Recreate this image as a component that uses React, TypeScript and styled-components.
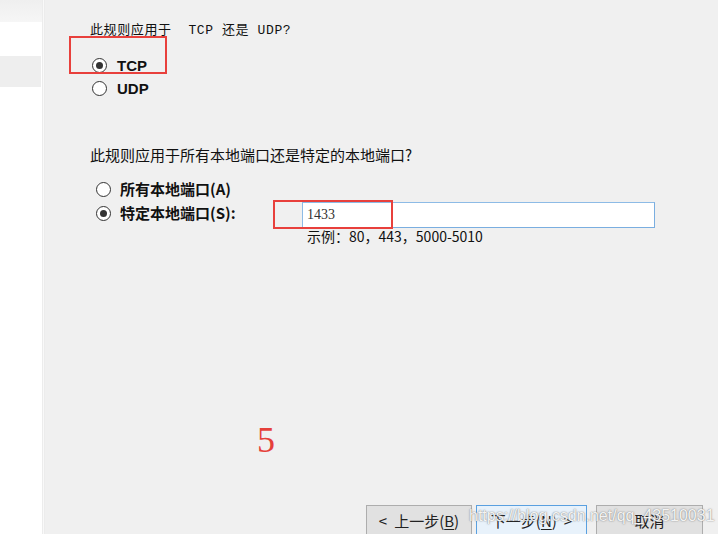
import React from "react";
import styled, { createGlobalStyle } from "styled-components";

const Global = createGlobalStyle`
  html, body { margin: 0; padding: 0; }
  body {
    width: 718px;
    height: 534px;
    overflow: hidden;
    background: #f0f0f0;
    font-family: "Noto Sans CJK SC", "Noto Sans", sans-serif;
    color: #000;
  }
`;

const Page = styled.div`
  display: flex;
  width: 718px;
  height: 534px;
  overflow: hidden;
`;

const Sidebar = styled.div`
  width: 42px;
  flex-shrink: 0;
  background: #ffffff;
  display: flex;
  flex-direction: column;
`;

const SideHeader = styled.div`
  height: 22px;
  background: linear-gradient(#efefef, #f6f6f6);
`;

const SideItem = styled.div<{ $active?: boolean }>`
  height: 31px;
  margin-top: 34px;
  width: 41px;
  background: ${(p) => (p.$active ? "#eeeeee" : "transparent")};
`;

const Divider = styled.div`
  box-sizing: border-box;
  width: 3px;
  flex-shrink: 0;
  background: #f9f9f9;
  border-left: 1px solid #ececec;
  border-right: 1px solid #ececec;
`;

const Main = styled.div`
  position: relative;
  flex: 1;
  display: flex;
  flex-direction: column;
  padding-left: 45px;
  background: #f0f0f0;
`;

const Question = styled.div<{ $mono?: boolean; $size: number; $top: number }>`
  margin-top: ${(p) => p.$top}px;
  font-size: ${(p) => p.$size}px;
  line-height: 20px;
  height: 20px;
  white-space: pre;
  color: #111;
  letter-spacing: ${(p) => (p.$mono ? "0.6px" : "0")};
  font-family: ${(p) =>
    p.$mono
      ? `"Liberation Mono", "Noto Sans CJK SC", monospace`
      : `"Noto Sans CJK SC", sans-serif`};
`;

const RadioGroup = styled.div<{ $indent: number; $top: number }>`
  display: flex;
  flex-direction: column;
  margin-left: ${(p) => p.$indent}px;
  margin-top: ${(p) => p.$top}px;
`;

const RadioRow = styled.div<{ $h: number }>`
  display: flex;
  align-items: flex-start;
  min-height: ${(p) => p.$h}px;
`;

const RadioLabelBox = styled.label<{ $h: number; $gap: number; $width?: number }>`
  display: flex;
  align-items: center;
  gap: ${(p) => p.$gap}px;
  height: ${(p) => p.$h}px;
  width: ${(p) => (p.$width ? `${p.$width}px` : "auto")};
  flex-shrink: 0;
`;

const Circle = styled.span<{ $checked?: boolean }>`
  box-sizing: border-box;
  width: 15px;
  height: 15px;
  border-radius: 50%;
  border: 1px solid #333;
  background: #fff;
  display: flex;
  align-items: center;
  justify-content: center;
  &::after {
    content: "";
    width: 7px;
    height: 7px;
    border-radius: 50%;
    background: ${(p) => (p.$checked ? "#333" : "transparent")};
  }
`;

const LabelText = styled.span<{ $latin?: boolean }>`
  font-weight: bold;
  font-size: 15px;
  color: #111;
  font-family: ${(p) =>
    p.$latin
      ? `"Liberation Sans", "Noto Sans CJK SC", sans-serif`
      : `"Noto Sans CJK SC", sans-serif`};
  line-height: 18px;
`;

const InputCol = styled.div`
  display: flex;
  flex-direction: column;
  padding-top: 1px;
`;

const PortInput = styled.div`
  box-sizing: border-box;
  width: 353px;
  height: 26px;
  background: #fff;
  border: 1px solid #8dbbe6;
  border-right-color: #7aaee0;
  border-bottom-color: #7aaee0;
  padding-left: 4px;
  display: flex;
  align-items: center;
  font-family: "Liberation Serif", serif;
  font-size: 14px;
  color: #333;
`;

const Example = styled.div`
  padding-left: 5px;
  font-size: 14px;
  line-height: 16px;
  color: #111;
  font-family: "Noto Sans CJK SC", sans-serif;
`;

const Footer = styled.div`
  margin-top: auto;
  height: 29px;
  display: flex;
  justify-content: flex-end;
  align-items: flex-start;
  padding-right: 15px;
`;

const Button = styled.div<{ $w: number; $primary?: boolean; $gap: number }>`
  box-sizing: border-box;
  width: ${(p) => p.$w}px;
  height: 31px;
  margin-left: ${(p) => p.$gap}px;
  flex-shrink: 0;
  background: ${(p) => (p.$primary ? "#e8f2fb" : "#e1e1e1")};
  border: 1px solid ${(p) => (p.$primary ? "#5aa0e0" : "#adadad")};
  display: flex;
  justify-content: center;
  padding-top: 5px;
  font-size: 15px;
  line-height: 20px;
  color: #222;
  font-family: "Noto Sans CJK SC", sans-serif;
  white-space: pre;
  u { text-decoration: underline; text-underline-offset: 2px; }
`;

const Gap = styled.span`
  display: inline-block;
  width: 7px;
`;

const Annotation = styled.div<{ $x: number; $y: number; $w: number; $h: number }>`
  position: absolute;
  left: ${(p) => p.$x}px;
  top: ${(p) => p.$y}px;
  width: ${(p) => p.$w}px;
  height: ${(p) => p.$h}px;
  box-sizing: border-box;
  border: 2px solid #e8403c;
  pointer-events: none;
`;

const StepNumber = styled.div`
  position: absolute;
  left: 212px;
  top: 418px;
  font-family: "Liberation Serif", serif;
  font-size: 36px;
  line-height: 44px;
  color: #e5403a;
`;

const Watermark = styled.div`
  position: absolute;
  left: 424px;
  top: 506px;
  font-family: "Liberation Sans", sans-serif;
  font-size: 16px;
  line-height: 20px;
  color: rgba(255, 255, 255, 0.92);
  text-shadow: 0 0 1px rgba(90, 90, 90, 0.7), 0 0 2px rgba(120, 120, 120, 0.5);
  white-space: nowrap;
  pointer-events: none;
`;

export default function App() {
  return (
    <>
      <Global />
      <Page>
        <Sidebar>
          <SideHeader />
          <SideItem $active />
        </Sidebar>
        <Divider />
        <Main>
          <Question $mono $size={13} $top={21}>
            {"此规则应用于  TCP 还是 UDP?"}
          </Question>
          <RadioGroup $indent={2} $top={13}>
            <RadioRow $h={23}>
              <RadioLabelBox $h={23} $gap={10}>
                <Circle $checked />
                <LabelText $latin>TCP</LabelText>
              </RadioLabelBox>
            </RadioRow>
            <RadioRow $h={23}>
              <RadioLabelBox $h={23} $gap={10}>
                <Circle />
                <LabelText $latin>UDP</LabelText>
              </RadioLabelBox>
            </RadioRow>
          </RadioGroup>

          <Question $size={15} $top={45}>
            此规则应用于所有本地端口还是特定的本地端口?
          </Question>
          <RadioGroup $indent={6} $top={12}>
            <RadioRow $h={24}>
              <RadioLabelBox $h={24} $gap={9}>
                <Circle />
                <LabelText>所有本地端口(A)</LabelText>
              </RadioLabelBox>
            </RadioRow>
            <RadioRow $h={24}>
              <RadioLabelBox $h={24} $gap={9} $width={206}>
                <Circle $checked />
                <LabelText>特定本地端口(S):</LabelText>
              </RadioLabelBox>
              <InputCol>
                <PortInput>1433</PortInput>
                <Example>示例：80，443，5000-5010</Example>
              </InputCol>
            </RadioRow>
          </RadioGroup>

          <Footer>
            <Button $w={106} $gap={0}>
              {"<"}
              <Gap />
              {"上一步("}
              <u>B</u>
              {")"}
            </Button>
            <Button $w={111} $gap={4} $primary>
              {"下一步("}
              <u>N</u>
              {")"}
              <Gap />
              {">"}
            </Button>
            <Button $w={107} $gap={9}>
              取消
            </Button>
          </Footer>

          <Annotation $x={24} $y={36} $w={98} $h={38} />
          <Annotation $x={228} $y={200} $w={120} $h={29} />
          <StepNumber>5</StepNumber>
          <Watermark>https://blog.csdn.net/qq_43510031</Watermark>
        </Main>
      </Page>
    </>
  );
}
